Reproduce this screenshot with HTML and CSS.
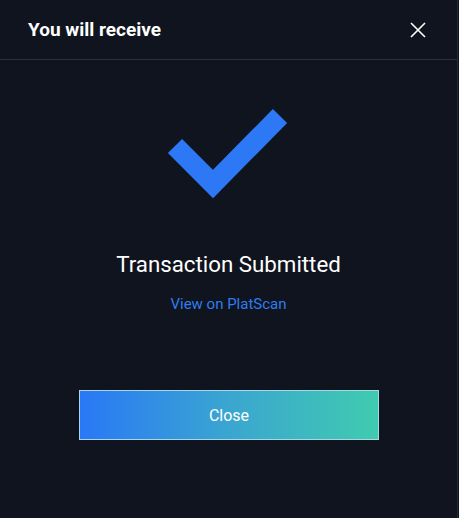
FILE: index.html
```html
<!DOCTYPE html>
<html>
<head>
<meta charset="utf-8">
<link rel="stylesheet" href="styles.css">
</head>
<body>
<div class="modal">
  <div class="header">
    <h2 class="title">You will receive</h2>
    <button class="close-x" aria-label="Close">
      <svg width="18" height="18" viewBox="0 0 18 18"><path d="M2 2 L16 16 M16 2 L2 16" stroke="#ffffff" stroke-width="1.6" fill="none"/></svg>
    </button>
  </div>
  <div class="content">
    <svg class="check" width="140" height="100" viewBox="0 0 140 100">
      <polyline points="15,47 53,85 120,17" fill="none" stroke="#2d78f4" stroke-width="20" stroke-linejoin="miter" stroke-linecap="butt"/>
    </svg>
    <div class="status">Transaction Submitted</div>
    <a class="link" href="#">View on PlatScan</a>
    <button class="btn">Close</button>
  </div>
</div>
</body>
</html>
```
FILE: styles.css
```css
html, body {
  margin: 0;
  padding: 0;
  background: #10141e;
}
.modal {
  width: 458px;
  height: 518px;
  box-sizing: border-box;
  border-right: 1px solid #232836;
  background: #10141e;
  font-family: Roboto, "Liberation Sans", sans-serif;
  color: #ffffff;
}
.header {
  height: 60px;
  box-sizing: border-box;
  border-bottom: 1px solid #2a2f3b;
  display: flex;
  align-items: center;
  justify-content: space-between;
  padding: 0 30px 0 28px;
}
.title {
  margin: 0;
  font-size: 19px;
  font-weight: 700;
  letter-spacing: 0;
}
.close-x {
  background: none;
  border: none;
  padding: 0;
  width: 18px;
  height: 18px;
  display: flex;
}
.content {
  display: flex;
  flex-direction: column;
  align-items: center;
}
.check {
  margin-top: 39px;
  margin-left: 2px;
}
.status {
  margin-top: 52px;
  font-size: 22.3px;
  font-weight: 400;
}
.link {
  margin-top: 18px;
  font-size: 15px;
  color: #2f7cf0;
  text-decoration: none;
}
.btn {
  margin-top: 77px;
  width: 300px;
  height: 50px;
  border: 1px solid #a8d8e8;
  background: linear-gradient(90deg, #2a78f6 0%, #3aa6d0 50%, #40cbb0 100%);
  color: #ffffff;
  font-family: Roboto, "Liberation Sans", sans-serif;
  font-size: 16px;
  margin-left: 1px;
}
```
